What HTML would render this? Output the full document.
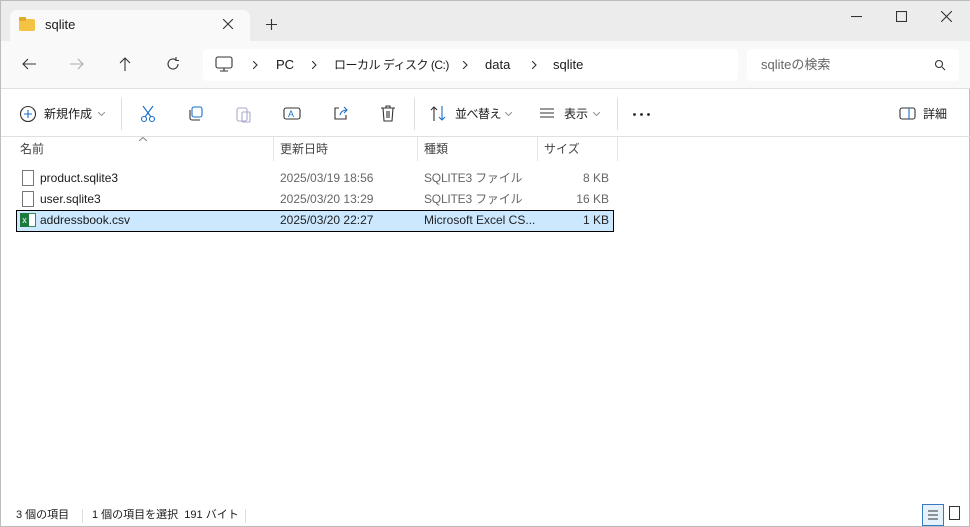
<!DOCTYPE html><html><head><meta charset="utf-8"><style>
*{margin:0;padding:0;box-sizing:border-box}
body{width:970px;height:527px;overflow:hidden;background:#fff;font-family:"Liberation Sans","Noto Sans CJK JP",sans-serif;font-size:12px;line-height:16px;color:#1a1a1a;position:relative;border:1px solid #bdbdbd}
.a{position:absolute;white-space:nowrap}
svg{position:absolute;fill:none;stroke:#333;stroke-width:1.1}
.bc{font-size:13px}
</style></head><body>
<div class="a" style="left:0;top:0;width:970px;height:40px;background:#ececec"></div>
<div class="a" style="left:9px;top:9px;width:240px;height:32px;background:#f9f9f9;border-radius:7px 7px 0 0"></div>
<div class="a" style="left:18px;top:18px;width:16px;height:12px;background:#f4c343;border-radius:2px"></div>
<div class="a" style="left:18px;top:16px;width:7px;height:4px;background:#e3a92a;border-radius:1px"></div>
<div class="a" style="left:44px;top:16px;font-size:13px">sqlite</div>
<svg style="left:222px;top:18px" width="10" height="10"><path d="M0 0l10 10M10 0L0 10"/></svg>
<svg style="left:265px;top:18px" width="11" height="11"><path d="M5.5 0v11M0 5.5h11"/></svg>
<svg style="left:850px;top:15px" width="11" height="2"><path d="M0 .5h11"/></svg>
<svg style="left:895px;top:10px" width="11" height="11"><rect x=".5" y=".5" width="10" height="10"/></svg>
<svg style="left:940px;top:10px" width="11" height="11"><path d="M0 0l11 11M11 0L0 11"/></svg>
<div class="a" style="left:0;top:40px;width:970px;height:48px;background:#f9f9f9;border-bottom:1px solid #e0e0e0"></div>
<svg style="left:21px;top:57px" width="14" height="12"><path d="M14 6H1M6 1L1 6l5 5"/></svg>
<svg style="left:69px;top:57px;stroke:#aaa" width="14" height="12"><path d="M0 6h13M8 1l5 5-5 5"/></svg>
<svg style="left:118px;top:56px" width="12" height="14"><path d="M6 14V1M1 6l5-5 5 5"/></svg>
<svg style="left:165px;top:56px" width="14" height="14"><path d="M12 7a5 5 0 1 1-2-4M10 0v3.5h3"/></svg>
<div class="a" style="left:202px;top:48px;width:535px;height:32px;background:#fff;border-radius:4px"></div>
<svg style="left:214px;top:55px" width="18" height="16"><rect x="1" y="1" width="16" height="11" rx="2"/><path d="M5 15h8M9 12v3"/></svg>
<svg style="left:252px;top:60px" width="5" height="8"><path d="M0 0l4 4-4 4"/></svg>
<div class="a bc" style="left:275px;top:56px">PC</div>
<svg style="left:311px;top:60px" width="5" height="8"><path d="M0 0l4 4-4 4"/></svg>
<div class="a bc" style="left:333px;top:56px;font-size:12px;letter-spacing:-0.5px">ローカル ディスク (C:)</div>
<svg style="left:462px;top:60px" width="5" height="8"><path d="M0 0l4 4-4 4"/></svg>
<div class="a bc" style="left:484px;top:56px">data</div>
<svg style="left:531px;top:60px" width="5" height="8"><path d="M0 0l4 4-4 4"/></svg>
<div class="a bc" style="left:552px;top:56px">sqlite</div>
<div class="a" style="left:746px;top:48px;width:212px;height:32px;background:#fff;border-radius:4px"></div>
<div class="a" style="left:760px;top:56px;font-size:13px;color:#666">sqliteの検索</div>
<svg style="left:933px;top:58px" width="12" height="12"><circle cx="5" cy="5" r="3.5"/><path d="M8 8l3 3"/></svg>
<svg style="left:18px;top:104px" width="18" height="18"><circle cx="9" cy="9" r="7.5"/><path d="M9 5v8M5 9h8" stroke="#1a6fc9"/></svg>
<div class="a" style="left:43px;top:105px">新規作成</div>
<svg style="left:97px;top:111px;stroke:#999" width="7" height="4"><path d="M0 0l3.5 3.5L7 0"/></svg>
<div class="a" style="left:120px;top:97px;width:1px;height:32px;background:#e0e0e0"></div>
<svg style="left:139px;top:104px;stroke:#1a6fc9" width="16" height="18"><path d="M3 1l8 11M13 1L5 12"/><circle cx="4" cy="14" r="2.5"/><circle cx="12" cy="14" r="2.5"/></svg>
<svg style="left:187px;top:105px" width="16" height="16"><rect x="4" y="1" width="10" height="10" rx="2" stroke="#1a6fc9"/><path d="M2 4v8a2 2 0 002 2h8"/></svg>
<svg style="left:235px;top:104px;stroke:#aac" width="16" height="18"><rect x="1" y="3" width="10" height="13" rx="2"/><rect x="6" y="7" width="8" height="10" rx="1"/></svg>
<svg style="left:282px;top:104px" width="18" height="17"><rect x="1" y="3" width="16" height="11" rx="2"/><text x="5" y="12" font-size="9" fill="#1a6fc9" stroke="none" font-family="Liberation Sans">A</text></svg>
<svg style="left:331px;top:104px" width="17" height="16"><path d="M7 3H3v11h11v-4"/><path d="M8 10c1-4 4-5 7-5M12 2l3 3-3 3" stroke="#1a6fc9"/></svg>
<svg style="left:379px;top:104px" width="16" height="17"><path d="M1 3h14M6 3V1h4v2M3 3l1 13h8l1-13M7 6v7M9 6v7"/></svg>
<div class="a" style="left:413px;top:97px;width:1px;height:32px;background:#e0e0e0"></div>
<svg style="left:429px;top:105px" width="16" height="15"><path d="M4 15V1M1 4l3-3 3 3"/><path d="M12 0v14M9 11l3 3 3-3" stroke="#1a6fc9"/></svg>
<div class="a" style="left:454px;top:105px;letter-spacing:-0.5px">並べ替え</div>
<svg style="left:504px;top:111px;stroke:#999" width="7" height="4"><path d="M0 0l3.5 3.5L7 0"/></svg>
<svg style="left:538px;top:106px" width="16" height="12"><path d="M1 2h14M1 6h14M1 10h14"/></svg>
<div class="a" style="left:563px;top:105px">表示</div>
<svg style="left:592px;top:111px;stroke:#999" width="7" height="4"><path d="M0 0l3.5 3.5L7 0"/></svg>
<div class="a" style="left:616px;top:97px;width:1px;height:32px;background:#e0e0e0"></div>
<svg style="left:632px;top:112px;stroke:none;fill:#222" width="18" height="3"><circle cx="1.5" cy="1.5" r="1.4"/><circle cx="8.5" cy="1.5" r="1.4"/><circle cx="15.5" cy="1.5" r="1.4"/></svg>
<svg style="left:898px;top:106px" width="17" height="13"><rect x="1" y="1" width="15" height="11" rx="2"/><path d="M10 1v11" stroke="#1a6fc9"/></svg>
<div class="a" style="left:922px;top:105px">詳細</div>
<div class="a" style="left:0;top:135px;width:970px;height:1px;background:#e0e0e0"></div>
<div class="a" style="left:19px;top:140px;color:#444">名前</div>
<svg style="left:138px;top:136px;stroke:#888" width="8" height="4"><path d="M0 4l4-3.5L8 4"/></svg>
<div class="a" style="left:272px;top:136px;width:1px;height:24px;background:#e5e5e5"></div>
<div class="a" style="left:279px;top:140px;color:#444">更新日時</div>
<div class="a" style="left:416px;top:136px;width:1px;height:24px;background:#e5e5e5"></div>
<div class="a" style="left:423px;top:140px;color:#444">種類</div>
<div class="a" style="left:536px;top:136px;width:1px;height:24px;background:#e5e5e5"></div>
<div class="a" style="left:543px;top:140px;color:#444">サイズ</div>
<div class="a" style="left:616px;top:136px;width:1px;height:24px;background:#e5e5e5"></div>
<div class="a" style="left:15px;top:209px;width:598px;height:22px;background:#cce8ff;border:1px solid #000"></div>
<div class="a" style="left:21px;top:169px;width:12px;height:16px;border:1px solid #777;background:#fff"></div>
<div class="a" style="left:21px;top:190px;width:12px;height:16px;border:1px solid #777;background:#fff"></div>
<div class="a" style="left:19px;top:212px;width:16px;height:14px;background:#fff;border:1px solid #3a8a4a"></div>
<div class="a" style="left:19px;top:212px;width:9px;height:14px;background:#1d7a3e;color:#fff;font-size:9px;text-align:center;line-height:14px">x</div>
<div class="a" style="left:39px;top:169px">product.sqlite3</div>
<div class="a" style="left:39px;top:190px">user.sqlite3</div>
<div class="a" style="left:39px;top:211px">addressbook.csv</div>
<div class="a" style="left:279px;top:169px;color:#666">2025/03/19 18:56</div>
<div class="a" style="left:279px;top:190px;color:#666">2025/03/20 13:29</div>
<div class="a" style="left:279px;top:211px;color:#222">2025/03/20 22:27</div>
<div class="a" style="left:423px;top:169px;color:#666;letter-spacing:-0.2px">SQLITE3 ファイル</div>
<div class="a" style="left:423px;top:190px;color:#666;letter-spacing:-0.2px">SQLITE3 ファイル</div>
<div class="a" style="left:423px;top:211px;color:#222">Microsoft Excel CS...</div>
<div class="a" style="left:540px;top:169px;width:68px;text-align:right;color:#666">8 KB</div>
<div class="a" style="left:540px;top:190px;width:68px;text-align:right;color:#666">16 KB</div>
<div class="a" style="left:540px;top:211px;width:68px;text-align:right;color:#222">1 KB</div>
<div class="a" style="left:15px;top:506px;font-size:11px">3 個の項目</div>
<div class="a" style="left:81px;top:508px;width:1px;height:14px;background:#ddd"></div>
<div class="a" style="left:91px;top:506px;font-size:11px">1 個の項目を選択&nbsp; 191 バイト</div>
<div class="a" style="left:244px;top:508px;width:1px;height:14px;background:#ddd"></div>
<div class="a" style="left:921px;top:503px;width:22px;height:22px;background:#e5f1fb;border:1px solid #3a78c2"></div>
<svg style="left:926px;top:508px" width="12" height="12"><path d="M1 2h10M1 6h10M1 10h10"/></svg>
<div class="a" style="left:948px;top:505px;width:11px;height:14px;border:1.2px solid #333"></div>
</body></html>
